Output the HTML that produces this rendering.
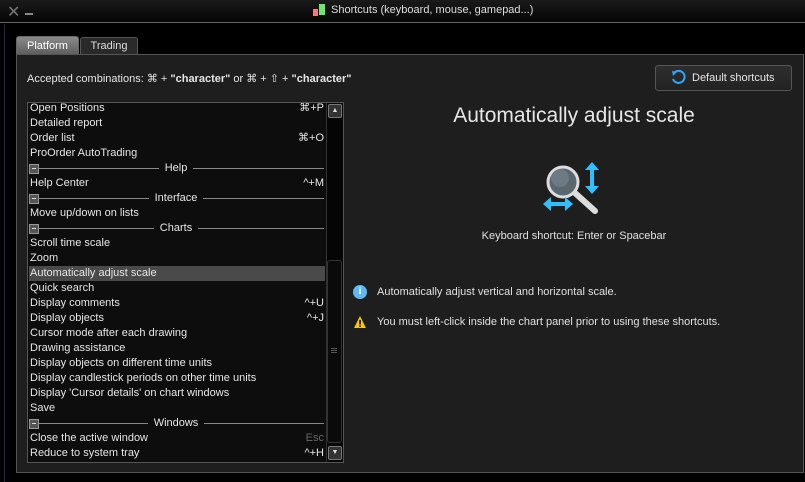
<!DOCTYPE html>
<html><head><style>
*{margin:0;padding:0;box-sizing:border-box}
body{width:805px;height:482px;background:#000;font-family:"Liberation Sans",sans-serif;color:#ddd;position:relative;overflow:hidden;font-size:11px}
.a{position:absolute}
.row{position:absolute;left:30px;width:294px;height:15px;line-height:15px;font-size:11px;color:#e6e6e6}
.row .k{position:absolute;right:0;top:0}
.sec{position:absolute;left:28px;width:296px;height:15px}
.sec .bx{position:absolute;left:1px;top:3px;width:10px;height:10px;border:1px solid #999;background:#555}
.sec .bx:after{content:"";position:absolute;left:2px;top:3px;width:4px;height:1px;background:#ddd}
.sec .ln{position:absolute;left:11px;right:0;top:7px;height:1px;background:#888}
.sec .t{position:absolute;left:0;right:0;text-align:center;line-height:15px;color:#e6e6e6}
.sec .t span{background:#0d0d0d;padding:0 6px}
</style></head><body>
<div class="a" style="left:0;top:0;width:805px;height:23px;background:linear-gradient(#1a1a1a,#050505);border-bottom:1px solid #666"></div>
<div class="a" style="left:7px;top:2px;font-size:16px;color:#777">✕</div>
<div class="a" style="left:25px;top:13px;width:8px;height:2px;background:#888"></div>
<div class="a" style="left:313px;top:9px;width:5px;height:7px;background:#f47b7b"></div>
<div class="a" style="left:319px;top:4px;width:6px;height:11px;background:#6de86d"></div>
<div class="a" style="left:331px;top:4px;font-size:11px;color:#ddd">Shortcuts (keyboard, mouse, gamepad...)</div>
<div class="a" style="left:4px;top:24px;width:1px;height:458px;background:#1f2a44"></div>
<div class="a" style="left:16px;top:36px;width:63px;height:19px;background:linear-gradient(#8a8a8a,#5c5c5c);border:1px solid #666;border-bottom:none;border-radius:3px 3px 0 0;color:#fff;text-align:center;line-height:18px">Platform</div>
<div class="a" style="left:80px;top:37px;width:58px;height:18px;background:#2a2a2a;border:1px solid #555;border-bottom:none;border-radius:3px 3px 0 0;color:#ddd;text-align:center;line-height:17px">Trading</div>
<div class="a" style="left:16px;top:54px;width:788px;height:419px;background:#1e1e1e;border:1px solid #555"></div>
<div class="a" style="left:27px;top:72px;color:#e6e6e6">Accepted combinations: ⌘ + <b>"character"</b> or ⌘ + ⇧ + <b>"character"</b></div>
<div class="a" style="left:655px;top:65px;width:137px;height:26px;background:linear-gradient(#2e2e2e,#222);border:1px solid #555;border-radius:3px;color:#e6e6e6;line-height:24px;padding-left:36px">Default shortcuts</div>
<svg class="a" style="left:670px;top:69px" width="18" height="18" viewBox="0 0 18 18"><path d="M4 4 A6 6 0 1 1 3 10" fill="none" stroke="#2ea6ff" stroke-width="2"/><path d="M2 2 L7 3 L3 7Z" fill="#2ea6ff"/></svg>
<div class="a" style="left:27px;top:102px;width:317px;height:361px;background:#0d0d0d;border:1px solid #555;overflow:hidden">
</div>
<div class="a" style="left:28px;top:103px;width:298px;height:359px;overflow:hidden">
<div style="position:relative;left:-28px;top:-102px">
<div class="row" style="top:100px">Open Positions<span class="k">⌘+P</span></div>
<div class="row" style="top:115px">Detailed report</div>
<div class="row" style="top:130px">Order list<span class="k">⌘+O</span></div>
<div class="row" style="top:145px">ProOrder AutoTrading</div>
<div class="sec" style="top:160px"><div class="ln"></div><div class="t"><span>Help</span></div><div class="bx"></div></div>
<div class="row" style="top:175px">Help Center<span class="k">^+M</span></div>
<div class="sec" style="top:190px"><div class="ln"></div><div class="t"><span>Interface</span></div><div class="bx"></div></div>
<div class="row" style="top:205px">Move up/down on lists</div>
<div class="sec" style="top:220px"><div class="ln"></div><div class="t"><span>Charts</span></div><div class="bx"></div></div>
<div class="row" style="top:235px">Scroll time scale</div>
<div class="row" style="top:250px">Zoom</div>
<div class="a" style="left:29px;top:265px;width:296px;height:15px;background:#4a4a4a"></div>
<div class="row" style="top:265px">Automatically adjust scale</div>
<div class="row" style="top:280px">Quick search</div>
<div class="row" style="top:295px">Display comments<span class="k">^+U</span></div>
<div class="row" style="top:310px">Display objects<span class="k">^+J</span></div>
<div class="row" style="top:325px">Cursor mode after each drawing</div>
<div class="row" style="top:340px">Drawing assistance</div>
<div class="row" style="top:355px">Display objects on different time units</div>
<div class="row" style="top:370px">Display candlestick periods on other time units</div>
<div class="row" style="top:385px">Display 'Cursor details' on chart windows</div>
<div class="row" style="top:400px">Save</div>
<div class="sec" style="top:415px"><div class="ln"></div><div class="t"><span>Windows</span></div><div class="bx"></div></div>
<div class="row" style="top:430px">Close the active window<span class="k" style="color:#666">Esc</span></div>
<div class="row" style="top:445px">Reduce to system tray<span class="k">^+H</span></div>
</div></div>
<div class="a" style="left:326px;top:103px;width:17px;height:359px;background:#050505;border-left:1px solid #333"></div>
<div class="a" style="left:328px;top:104px;width:14px;height:14px;background:#333;border:1px solid #777;border-radius:2px;color:#ddd;font-size:7px;text-align:center;line-height:12px">▲</div>
<div class="a" style="left:328px;top:446px;width:14px;height:14px;background:#333;border:1px solid #777;border-radius:2px;color:#ddd;font-size:7px;text-align:center;line-height:12px">▼</div>
<div class="a" style="left:327px;top:260px;width:15px;height:183px;background:#0a0a0a;border:1px solid #333;border-radius:3px"></div>
<div class="a" style="left:331px;top:348px;width:6px;height:5px;border-top:1px solid #555;border-bottom:1px solid #555"></div>
<div class="a" style="left:331px;top:350px;width:6px;height:1px;background:#555"></div>
<div class="a" style="left:344px;width:460px;text-align:center;font-size:21px;color:#e6e6e6;top:104px">Automatically adjust scale</div>
<svg class="a" style="left:530px;top:150px" width="80" height="70" viewBox="530 150 80 70">
<line x1="575" y1="193" x2="595" y2="211" stroke="#ddd" stroke-width="6" stroke-linecap="round"/>
<circle cx="563" cy="182" r="15" fill="#5a6670" stroke="#ddd" stroke-width="3"/>
<circle cx="560" cy="178" r="9" fill="#7a8690" opacity=".6"/>
<path d="M592 162 L599 170 L594 170 L594 186 L599 186 L592 194 L585 186 L590 186 L590 170 L585 170Z" fill="#2ec0ff"/>
<path d="M543 204 L551 197 L551 202 L565 202 L565 197 L573 204 L565 211 L565 206 L551 206 L551 211Z" fill="#2ec0ff"/>
</svg>
<div class="a" style="left:344px;width:460px;top:230px;text-align:center;color:#e0e0e0">Keyboard shortcut: Enter or Spacebar</div>
<div class="a" style="left:353px;top:285px;width:14px;height:14px;border-radius:50%;background:#5fb8f0;color:#fff;font-weight:bold;font-size:10px;text-align:center;line-height:14px">i</div>
<div class="a" style="left:377px;top:286px;color:#e0e0e0">Automatically adjust vertical and horizontal scale.</div>
<svg class="a" style="left:353px;top:315px" width="14" height="14" viewBox="0 0 14 14"><path d="M7 1 L13 13 L1 13Z" fill="#f5c518"/><rect x="6.3" y="5" width="1.5" height="4.5" fill="#000"/><rect x="6.3" y="10.5" width="1.5" height="1.5" fill="#000"/></svg>
<div class="a" style="left:377px;top:316px;color:#e0e0e0">You must left-click inside the chart panel prior to using these shortcuts.</div>
</body></html>
